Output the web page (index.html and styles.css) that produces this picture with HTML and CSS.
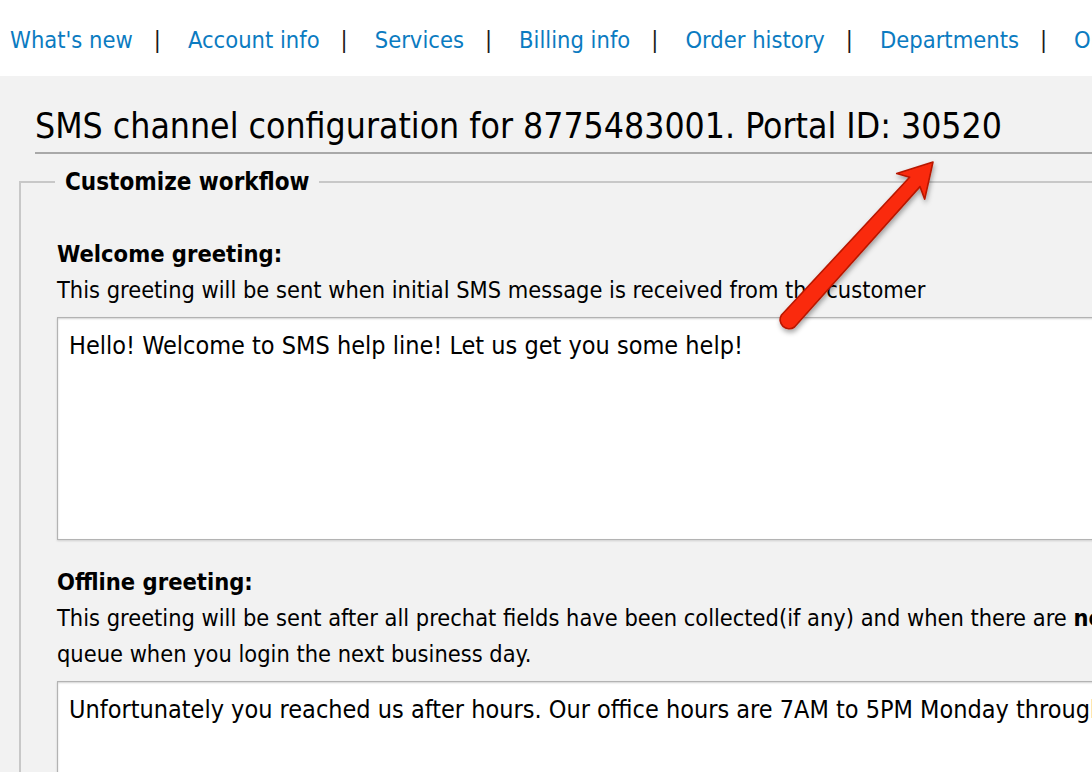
FILE: index.html
```html
<!DOCTYPE html>
<html lang="en">
<head>
<meta charset="utf-8">
<title>SMS channel configuration</title>
<link rel="stylesheet" href="styles.css">
</head>
<body>
<div class="page">
  <nav class="topnav">
    <a href="#" class="nav-link">What's new</a><span class="sep">|</span>
    <a href="#" class="nav-link">Account info</a><span class="sep">|</span>
    <a href="#" class="nav-link">Services</a><span class="sep">|</span>
    <a href="#" class="nav-link">Billing info</a><span class="sep">|</span>
    <a href="#" class="nav-link">Order history</a><span class="sep">|</span>
    <a href="#" class="nav-link">Departments</a><span class="sep">|</span>
    <a href="#" class="nav-link">Operators</a>
  </nav>
  <main class="content">
    <h1 class="page-title">SMS channel configuration for 8775483001. Portal ID: 30520</h1>
    <fieldset class="workflow">
      <legend class="workflow-legend">Customize workflow</legend>
      <div class="field">
        <label class="field-label" for="welcome">Welcome greeting:</label>
        <p class="field-hint">This greeting will be sent when initial SMS message is received from the customer</p>
        <textarea id="welcome" class="field-input">Hello! Welcome to SMS help line! Let us get you some help!</textarea>
      </div>
      <div class="field">
        <label class="field-label" for="offline">Offline greeting:</label>
        <p class="field-hint">This greeting will be sent after all prechat fields have been collected(if any) and when there are <b>no agents online</b>. The message will wait in the<br>queue when you login the next business day.</p>
        <textarea id="offline" class="field-input">Unfortunately you reached us after hours. Our office hours are 7AM to 5PM Monday through Friday.</textarea>
      </div>
    </fieldset>
    <svg class="callout-arrow" width="200" height="200" viewBox="0 0 200 200" aria-hidden="true">
      <defs>
        <filter id="arrowShadow" x="-20%" y="-20%" width="140%" height="140%">
          <feDropShadow dx="1" dy="3" stdDeviation="2.5" flood-color="#000" flood-opacity="0.35"/>
        </filter>
      </defs>
      <path d="M173 18 L164.7 55.2 L160 42.6 L34.5 183 A9 9 0 0 1 21.5 171 L149.6 33.2 L136.7 29.6 Z" fill="#fa2b0c" stroke="#b81800" stroke-width="1.6" stroke-linejoin="round" filter="url(#arrowShadow)"/>
    </svg>
  </main>
</div>
</body>
</html>
```

FILE: styles.css
```css
html {
  overflow: hidden;
}

body {
  margin: 0;
  background: #f2f2f2;
  font-family: "DejaVu Sans Condensed", "DejaVu Sans", sans-serif;
  font-stretch: condensed;
  color: #000;
}

.page {
  width: 1500px;
}

.topnav {
  box-sizing: border-box;
  height: 76px;
  padding: 26px 0 0 10px;
  background: #fff;
  font-size: 23.5px;
  line-height: 28px;
  white-space: nowrap;
  display: flex;
  align-items: flex-start;
}

.nav-link {
  color: #0b7bc1;
  text-decoration: none;
}

.sep {
  color: #1a1a1a;
  margin: 0 27px 0 21px;
}

.content {
  position: relative;
  padding: 29px 0 60px 0;
  background: #f2f2f2;
}

.page-title {
  margin: 0 0 0 35px;
  padding: 0 0 5px 0;
  font-size: 35.3px;
  font-weight: normal;
  line-height: 42px;
  border-bottom: 2px solid #a9a9a9;
}

.workflow {
  margin: 14px 0 0 19px;
  padding: 40px 0 0 36px;
  border: 2px solid #c8c8c8;
  min-width: 0;
}

.workflow-legend {
  margin-left: -2px;
  padding: 0 10px;
  font-size: 24px;
  font-weight: bold;
  line-height: 28px;
}

.field {
  margin-bottom: 24px;
}

.field-label {
  display: block;
  font-size: 23.5px;
  font-weight: bold;
  line-height: 36px;
}

.field-hint {
  margin: 0 0 9px 0;
  font-size: 23.4px;
  line-height: 36px;
  white-space: nowrap;
}

.field-input {
  display: block;
  box-sizing: border-box;
  width: 1300px;
  height: 223px;
  margin: 0;
  padding: 13px 11px;
  font-family: inherit;
  font-stretch: condensed;
  font-size: 25px;
  color: #000;
  background: #fff;
  border: 1px solid #b3b3b3;
  border-radius: 0;
  box-shadow: inset 0 1px 2px rgba(0, 0, 0, 0.18), 0 1px 2px rgba(0, 0, 0, 0.15);
  resize: none;
}

.callout-arrow {
  position: absolute;
  left: 760px;
  top: 68px;
  overflow: visible;
}
```
